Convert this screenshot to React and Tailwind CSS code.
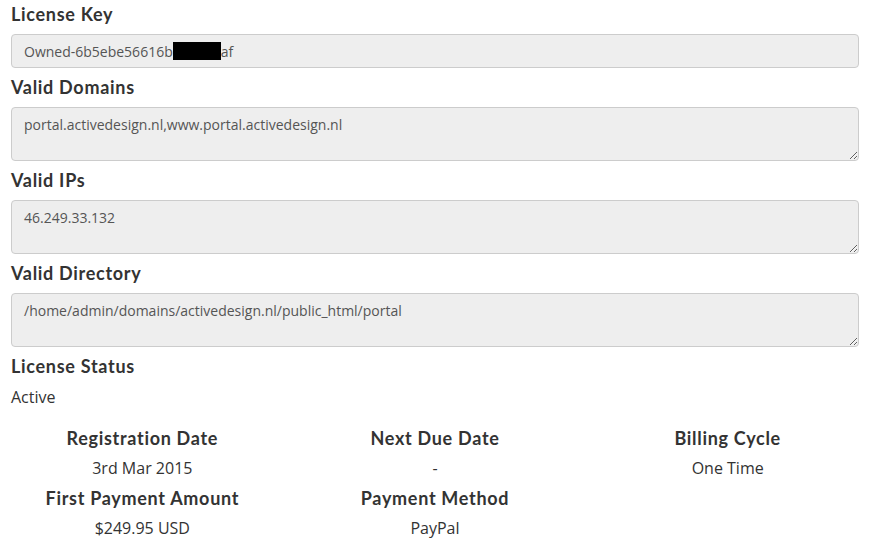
import React from 'react';

const heading = { fontFamily: 'Lato, "Open Sans", sans-serif' };
const body = { fontFamily: '"Open Sans", "Liberation Sans", sans-serif' };

const Label = ({ children, className = '' }) => (
  <div className={`h-[26px] leading-[26px] mb-[7px] text-[18px] font-bold tracking-[0.7px] text-[#333] ${className}`} style={heading}>
    {children}
  </div>
);

const Area = ({ value }) => (
  <textarea
    readOnly
    value={value}
    className="block w-full h-[54px] bg-[#eee] border border-[#ccc] rounded-[4px] px-[12px] pt-[7px] text-[14px] leading-[20px] text-[#555] outline-none"
    style={body}
  />
);

const details = [
  { label: 'Registration Date', value: '3rd Mar 2015' },
  { label: 'Next Due Date', value: '-' },
  { label: 'Billing Cycle', value: 'One Time' },
  { label: 'First Payment Amount', value: '$249.95 USD' },
  { label: 'Payment Method', value: 'PayPal' },
];

export default function App() {
  return (
    <div className="w-[888px] h-[552px] bg-white overflow-hidden pl-[11px] pt-[1px] pr-[29px]">
      {/* License key */}
      <Label>License Key</Label>
      <div
        className="h-[34px] bg-[#eee] border border-[#ccc] rounded-[4px] px-[12px] flex items-center text-[14px] text-[#555]"
        style={body}
      >
        Owned-6b5ebe56616b<span className="inline-block bg-black w-[48px] h-[18px]" />af
      </div>

      <Label className="mt-[6px]">Valid Domains</Label>
      <Area value="portal.activedesign.nl,www.portal.activedesign.nl" />

      <Label className="mt-[6px]">Valid IPs</Label>
      <Area value="46.249.33.132" />

      <Label className="mt-[6px]">Valid Directory</Label>
      <Area value="/home/admin/domains/activedesign.nl/public_html/portal" />

      <Label className="mt-[6px]">License Status</Label>
      <div className="h-[22px] leading-[22px] text-[16px] text-[#333]" style={body}>Active</div>

      {/* Dates and payment */}
      <div className="grid grid-cols-3 w-[878px] -ml-[15px] mt-[15px]">
        {details.map(d => (
          <div key={d.label} className="text-center">
            <div className="h-[30px] leading-[30px] text-[18px] font-bold tracking-[0.7px] text-[#333]" style={heading}>{d.label}</div>
            <div className="h-[30px] leading-[30px] text-[16px] text-[#333]" style={body}>{d.value}</div>
          </div>
        ))}
      </div>
    </div>
  );
}
